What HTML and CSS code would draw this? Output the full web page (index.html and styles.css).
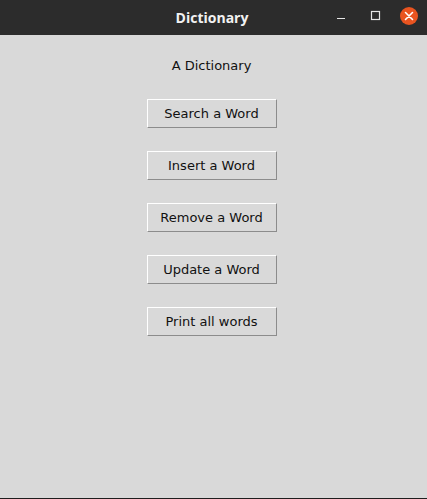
FILE: index.html
```html
<!DOCTYPE html>
<html>
<head>
<meta charset="utf-8">
<link rel="stylesheet" href="styles.css">
</head>
<body>
<div class="window">
  <div class="titlebar">
    <div class="title">Dictionary</div>
    <div class="controls">
      <svg class="ctl min" width="10" height="12" viewBox="0 0 10 12"><rect x="1" y="8" width="8" height="1" fill="#e6e6e6"/></svg>
      <svg class="ctl max" width="11" height="12" viewBox="0 0 11 12"><rect x="1.5" y="1.5" width="8" height="8" fill="none" stroke="#e6e6e6" stroke-width="1.2"/></svg>
      <svg class="close" width="20" height="20" viewBox="0 0 20 20"><circle cx="10" cy="10" r="9" fill="#e95420"/><path d="M6.5 6.5 L13.5 13.5 M13.5 6.5 L6.5 13.5" stroke="#fff" stroke-width="1.6" stroke-linecap="round"/></svg>
    </div>
  </div>
  <div class="content">
    <div class="label">A Dictionary</div>
    <div class="buttons">
      <button class="btn">Search a Word</button>
      <button class="btn">Insert a Word</button>
      <button class="btn">Remove a Word</button>
      <button class="btn">Update a Word</button>
      <button class="btn">Print all words</button>
    </div>
  </div>
</div>
</body>
</html>
```

FILE: styles.css
```css
html, body {
  margin: 0;
  padding: 0;
  background: #d9d9d9;
}
.window {
  width: 427px;
  height: 499px;
  display: flex;
  flex-direction: column;
  font-family: "DejaVu Sans", sans-serif;
}
.titlebar {
  height: 35px;
  flex: none;
  background: #2c2c2c;
  position: relative;
  display: flex;
  align-items: center;
  justify-content: center;
  padding-right: 3px;
}
.title {
  color: #f2f2f2;
  font-family: "Open Sans", "DejaVu Sans", sans-serif;
  font-weight: bold;
  font-size: 14px;
}
.controls {
  position: absolute;
  left: 336px;
  top: 6px;
  display: flex;
  align-items: center;
}
.ctl {
  display: block;
}
.max {
  margin-left: 24px;
}
.close {
  display: block;
  margin-left: 18px;
}
.content {
  flex: 1;
  background: #d9d9d9;
  border-bottom: 1px solid #1e1e1e;
  display: flex;
  flex-direction: column;
  align-items: center;
  padding-right: 4px;
}
.label {
  margin-top: 22px;
  font-size: 13px;
  color: #111;
  line-height: 17px;
}
.buttons {
  margin-top: 25px;
  display: flex;
  flex-direction: column;
  gap: 23px;
}
.btn {
  width: 130px;
  height: 29px;
  box-sizing: border-box;
  margin: 0;
  padding: 0;
  background: #d9d9d9;
  border: 1px solid;
  border-color: #ffffff #8c8c8c #8c8c8c #ffffff;
  font-family: "DejaVu Sans", sans-serif;
  font-size: 13px;
  color: #111;
}
```
